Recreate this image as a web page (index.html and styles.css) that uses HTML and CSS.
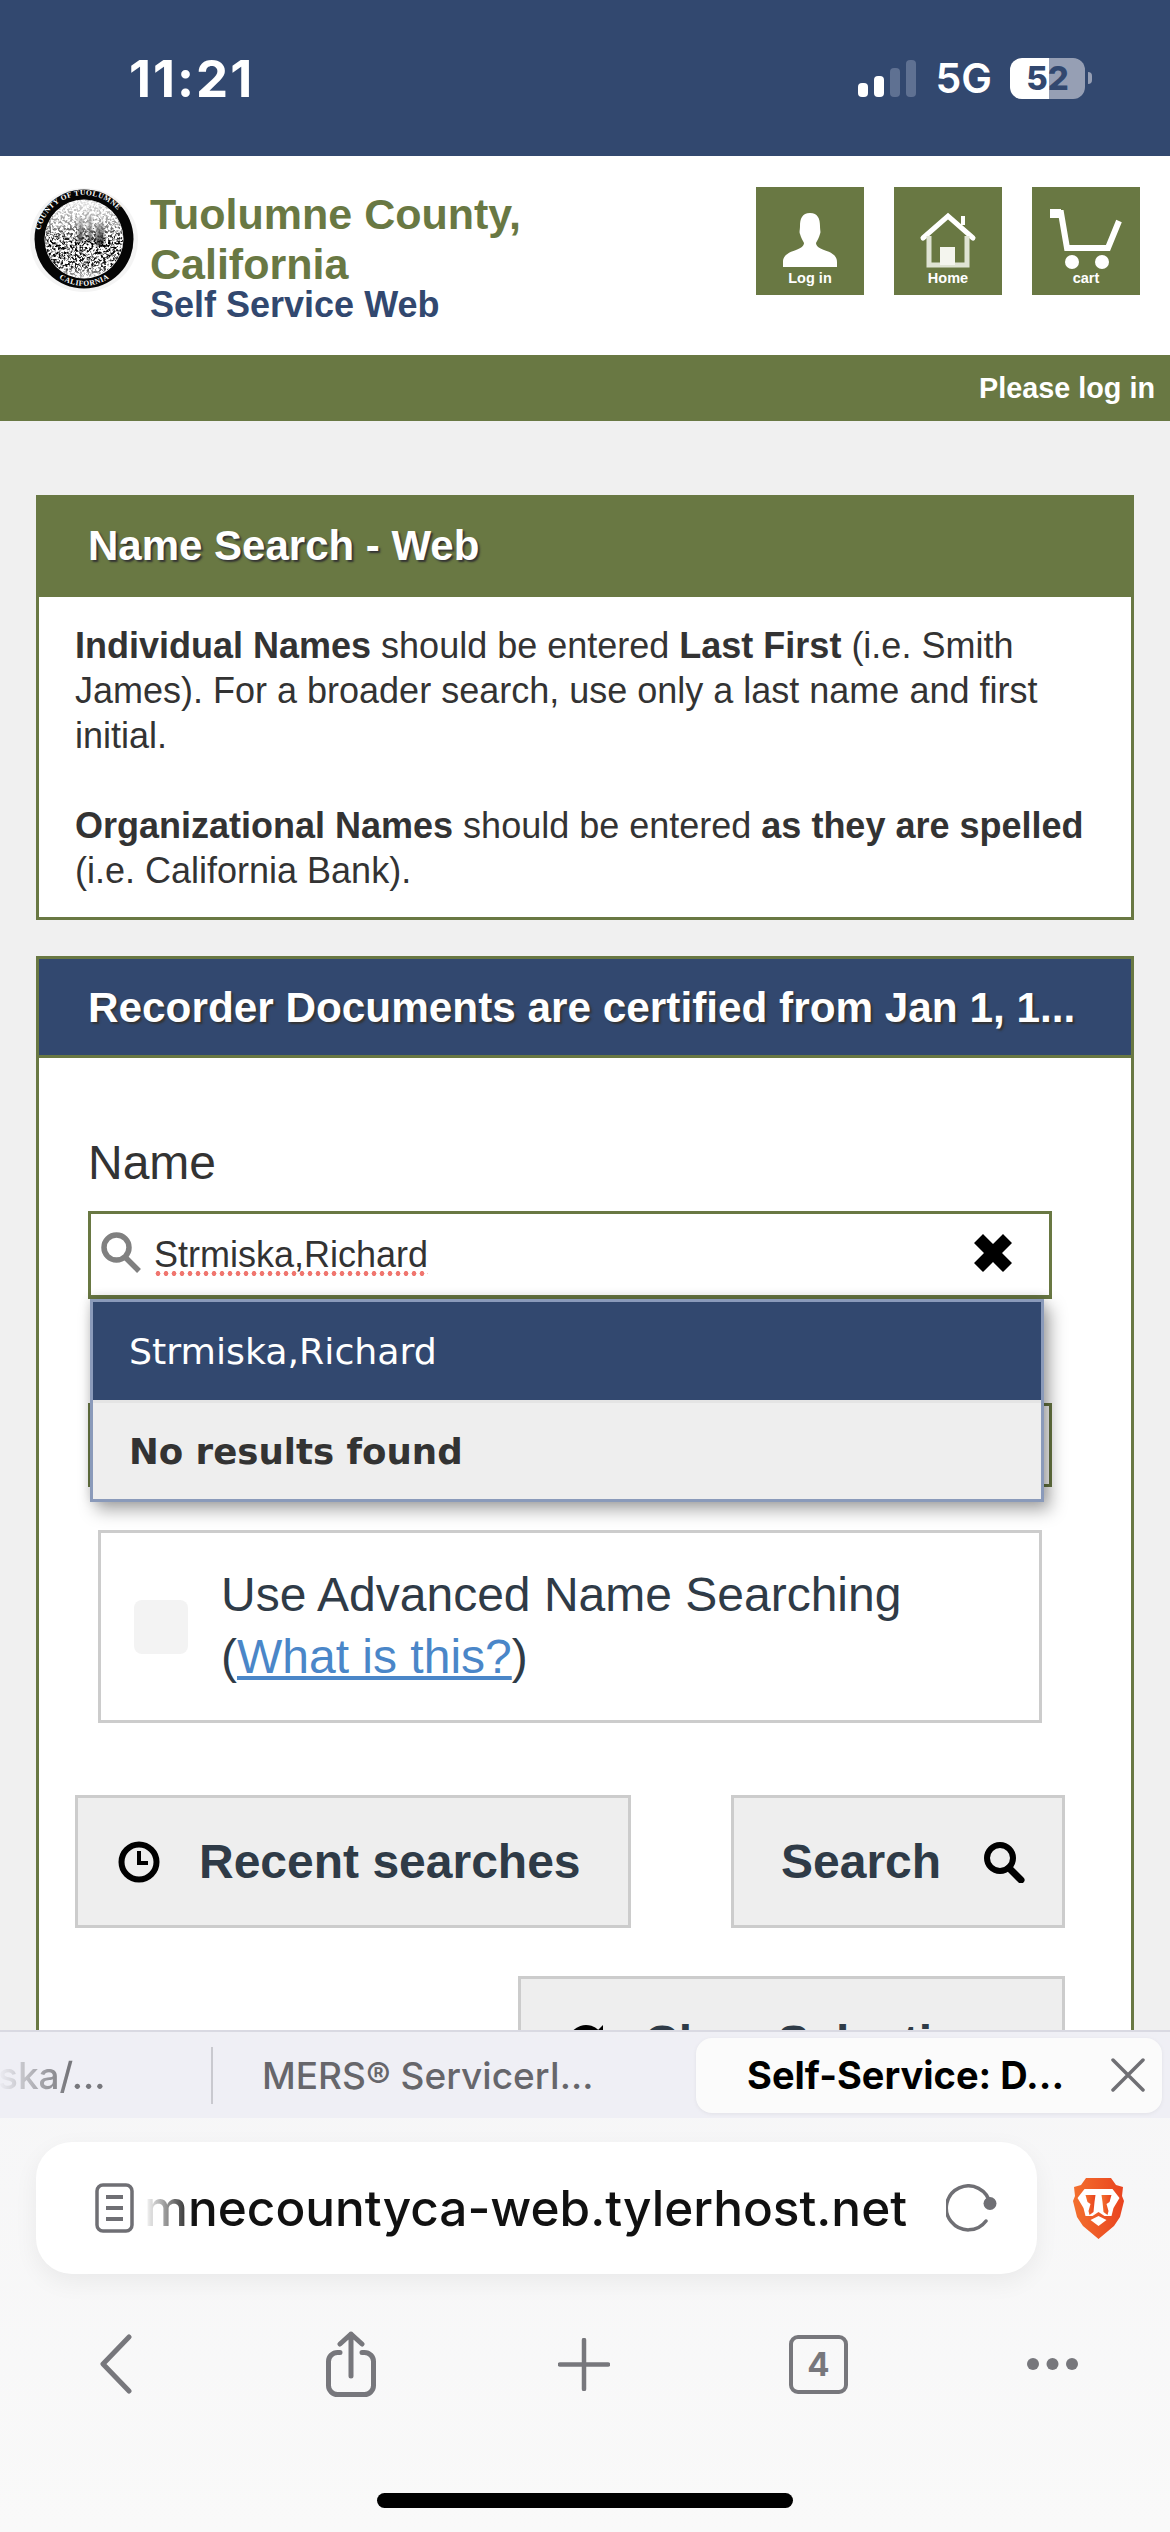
FILE: index.html
```html
<!DOCTYPE html>
<html lang="en">
<head>
<meta charset="utf-8">
<title>Self-Service: Name Search</title>
<link rel="stylesheet" href="styles.css">
</head>
<body>
<div class="screen">
  <div class="statusbar">
    <span class="clock">11:21</span>
    <div class="status-right">
      <div class="signal"><i class="b1"></i><i class="b2"></i><i class="b3"></i><i class="b4"></i></div>
      <span class="net">5G</span>
      <div class="battery"><span>52</span></div>
      <div class="nub"></div>
    </div>
  </div>

  <header class="site-header">
    <svg class="seal" viewBox="0 0 108 104" aria-hidden="true">
      <defs>
        <path id="arcT" d="M9 52a45 45 0 0 1 90 0"/>
        <path id="arcB" d="M11 66a45 45 0 0 0 86 0"/>
        <clipPath id="inner"><circle cx="54" cy="51" r="39"/></clipPath>
        <filter id="speck" x="0" y="0" width="100%" height="100%">
          <feTurbulence type="fractalNoise" baseFrequency="0.42" numOctaves="2" seed="7"/>
          <feColorMatrix type="matrix" values="0 0 0 0 0  0 0 0 0 0  0 0 0 0 0  3.500 3.500 0 0 -3.150"/>
        </filter>
        <linearGradient id="sky" x1="0" y1="0" x2="0" y2="1">
          <stop offset="0" stop-color="#fff" stop-opacity="0.9"/>
          <stop offset="0.32" stop-color="#fff" stop-opacity="0.55"/>
          <stop offset="0.55" stop-color="#fff" stop-opacity="0"/>
          <stop offset="0.85" stop-color="#fff" stop-opacity="0.1"/>
          <stop offset="1" stop-color="#fff" stop-opacity="0.8"/>
        </linearGradient>
      </defs>
      <ellipse cx="54" cy="52" rx="54" ry="52" fill="#f4f4f4"/>
      <circle cx="54" cy="51" r="49.500" fill="#050505"/>
      <circle cx="54" cy="51" r="39.500" fill="#fff"/>
      <text class="seal-t"><textPath href="#arcT" startOffset="7%">COUNTY OF TUOLUMNE</textPath></text>
      <text class="seal-t"><textPath href="#arcB" startOffset="27%">CALIFORNIA</textPath></text>
      <g clip-path="url(#inner)">
        <path class="seal-art" d="M48 30h5v24h-5zM58 28h4v26h-4zM66 36h8v22h-8z" fill="#555"/>
        <rect x="14" y="12" width="80" height="78" filter="url(#speck)"/>
        <rect x="14" y="12" width="80" height="78" fill="url(#sky)"/>
      </g>
    </svg>
    <div class="site-title">
      <h1>Tuolumne County,<br>California</h1>
      <p>Self Service Web</p>
    </div>
    <nav class="site-nav">
      <a class="tile">
        <svg viewBox="0 0 108 108" aria-hidden="true"><path class="blur" d="M54 26c8 0 10 6 10 13 0 4 1 6 0 8-1 4-3 7-4 9 0 3 3 5 8 7 9 3 13 6 13 12v5H27v-5c0-6 4-9 13-12 5-2 8-4 8-7-1-2-3-5-4-9-1-2 0-4 0-8 0-7 2-13 10-13z" fill="#fff"/></svg>
        <span>Log in</span>
      </a>
      <a class="tile">
        <svg viewBox="0 0 108 108" aria-hidden="true"><g class="blur" fill="none" stroke="#fff" stroke-width="5"><path d="M29 51l25-22 25 22" stroke-linecap="round"/><path d="M69 38v-9" stroke-width="4"/><path d="M35 49v29h38V49" stroke="#dfe3d4"/></g><path class="blur" d="M46 60h15v18H46z" fill="#f4f5ee"/></svg>
        <span>Home</span>
      </a>
      <a class="tile">
        <svg viewBox="0 0 108 108" aria-hidden="true"><g class="blur"><path d="M18 26h11l6 35h41l11-27" fill="none" stroke="#fff" stroke-width="6"/><path d="M18 22h11v9H18z" fill="#fff"/><circle cx="40" cy="75" r="7" fill="#fff"/><circle cx="70" cy="75" r="7" fill="#fff"/></g></svg>
        <span>cart</span>
      </a>
    </nav>
  </header>

  <div class="login-bar">Please log in</div>

  <main class="page">
    <section class="card">
      <h2 class="card-head green">Name Search - Web</h2>
      <div class="card-text">
        <p><b>Individual Names</b> should be entered <b>Last First</b> (i.e. Smith James). For a broader search, use only a last name and first initial.</p>
        <p><b>Organizational Names</b> should be entered <b>as they are spelled</b> (i.e. California Bank).</p>
      </div>
    </section>

    <section class="card card-form">
      <h2 class="card-head blue">Recorder Documents are certified from Jan 1, 1...</h2>
      <form class="form">
        <label class="field-label">Name</label>
        <div class="field-wrap">
          <div class="name-input">
            <svg class="mag" viewBox="0 0 41 42" aria-hidden="true"><circle cx="15.500" cy="15.500" r="12.500" fill="none" stroke="#808080" stroke-width="5.500"/><path d="M24 25l14 14" stroke="#808080" stroke-width="5.500"/></svg>
            <span class="typed">Strmiska,Richard</span>
            <svg class="clear" viewBox="0 0 42 42" aria-hidden="true"><path d="M2 11l9-9 10 10L31 2l9 9-10 10 10 10-9 9-10-10-10 10-9-9 10-10z" fill="#000"/></svg>
          </div>
          <ul class="suggest">
            <li class="on">Strmiska,Richard</li>
            <li class="none">No results found</li>
          </ul>
        </div>
        <div class="hidden-field"></div>
        <div class="adv-box">
          <span class="check"></span>
          <div class="adv-text">Use Advanced Name Searching<br>(<a class="link">What is this?</a>)</div>
        </div>
        <div class="btn-row">
          <button type="button" class="btn btn-recent">
            <svg viewBox="0 0 42 42" aria-hidden="true"><circle cx="21" cy="21" r="17.500" fill="none" stroke="#000" stroke-width="6"/><path d="M21 10v12h9" fill="none" stroke="#000" stroke-width="4"/></svg>
            <span>Recent searches</span>
          </button>
          <button type="button" class="btn btn-search">
            <span>Search</span>
            <svg viewBox="0 0 42 42" aria-hidden="true"><circle cx="17" cy="17" r="13" fill="none" stroke="#000" stroke-width="6"/><path d="M26 27l12 12" stroke="#000" stroke-width="7" stroke-linecap="round"/></svg>
          </button>
        </div>
        <div class="btn-row end">
          <button type="button" class="btn btn-clear">
            <svg viewBox="0 0 42 42" aria-hidden="true"><path d="M6 21a15 15 0 0 1 27-9" fill="none" stroke="#000" stroke-width="6"/><path d="M38 3v15H23z" fill="#000"/><path d="M36 21a15 15 0 0 1-27 9" fill="none" stroke="#000" stroke-width="6"/><path d="M4 39V24h15z" fill="#000"/></svg>
            <span>Clear Selection</span>
          </button>
        </div>
      </form>
    </section>
  </main>

  <div class="browser">
    <div class="tabstrip">
      <div class="tab tab-prev"><span>ska/...</span></div>
      <div class="tab-sep"></div>
      <div class="tab tab-mers">MERS® ServicerI...</div>
      <div class="tab tab-active">
        <span>Self-Service: D...</span>
        <svg viewBox="0 0 34 34" aria-hidden="true"><path d="M2 2l30 30M32 2L2 32" stroke="#6f6f74" stroke-width="3.500" stroke-linecap="round"/></svg>
      </div>
    </div>
    <div class="addr-row">
      <div class="addr">
        <svg class="doc" viewBox="0 0 39 50" aria-hidden="true"><rect x="2" y="2" width="35" height="46" rx="6" fill="none" stroke="#6f6f74" stroke-width="3.500"/><path d="M11 14h17M11 25h17M11 36h17" stroke="#6f6f74" stroke-width="4"/></svg>
        <span class="url">mnecountyca-web.tylerhost.net</span>
        <svg class="reload" viewBox="0 0 52 48" aria-hidden="true"><path d="M40 37A22 22 0 1 1 44 20" fill="none" stroke="#6f6f74" stroke-width="3.500" stroke-linecap="round"/><circle cx="44" cy="19.500" r="6.500" fill="#6f6f74"/></svg>
      </div>
      <svg class="brave" viewBox="0 0 51 61" aria-hidden="true">
        <defs><linearGradient id="bg" x1="0" y1="0" x2="1" y2="0"><stop offset="0" stop-color="#f3702e"/><stop offset="1" stop-color="#e9431f"/></linearGradient></defs>
        <path d="M13 0H38L43 7 50 9 49 18 51 23 47 39 41 48 25.500 61 10 48 4 39 0 23 2 18 1 9 8 7Z" fill="url(#bg)"/>
        <path d="M11.500 11H39.500L46.500 20 40.500 30 38.500 38H31.500L25.500 34 19.500 38H12.500L10.500 30 4.500 20Z" fill="#fff"/>
        <path d="M12.500 17H22.500L21.500 24 20.500 34 16.500 37 15.500 33 17.500 26 14.500 24Z" fill="url(#bg)"/>
        <path d="M38.500 17H28.500L29.500 24 30.500 34 34.500 37 35.500 33 33.500 26 36.500 24Z" fill="url(#bg)"/>
        <path d="M17.500 42L25.500 38 33.500 42 25.500 48Z" fill="#fff"/>
      </svg>
    </div>
    <div class="toolbar">
      <svg class="t-back" viewBox="0 0 32 60" aria-hidden="true"><path d="M29 3L3 30l26 27" fill="none" stroke="#77777c" stroke-width="5" stroke-linecap="round" stroke-linejoin="round"/></svg>
      <svg class="t-share" viewBox="0 0 50 66" aria-hidden="true"><path d="M14 21.500H11.500a9 9 0 0 0-9 9v24a9 9 0 0 0 9 9h27a9 9 0 0 0 9-9v-24a9 9 0 0 0-9-9H36" fill="none" stroke="#77777c" stroke-width="5" stroke-linecap="round"/><path d="M25 45V3M14 13L25 3 36 13" fill="none" stroke="#77777c" stroke-width="5" stroke-linecap="round" stroke-linejoin="round"/></svg>
      <svg class="t-plus" viewBox="0 0 52 53" aria-hidden="true"><path d="M26 2v49M2 26.500h48" stroke="#77777c" stroke-width="4.500" stroke-linecap="round"/></svg>
      <div class="t-tabs">4</div>
      <svg class="t-more" viewBox="0 0 53 14" aria-hidden="true"><circle cx="7" cy="7" r="6" fill="#77777c"/><circle cx="26.500" cy="7" r="6" fill="#77777c"/><circle cx="46" cy="7" r="6" fill="#77777c"/></svg>
    </div>
    <div class="home-bar"></div>
  </div>
</div>
</body>
</html>
```
FILE: styles.css
```css
* { box-sizing: border-box; }
html, body { margin: 0; padding: 0; }
body { font-family: "Liberation Sans", Arial, sans-serif; background: #f0f0f0; }
h1, h2, p, ul { margin: 0; padding: 0; }

.screen { width: 1170px; height: 2532px; display: flex; flex-direction: column; overflow: hidden; }

/* status bar */
.statusbar { height: 156px; flex: none; background: #32486f; color: #fff; display: flex; justify-content: space-between; align-items: center; padding: 0 78px 0 129px; font-family: Inter, sans-serif; }
.clock { font-size: 51px; font-weight: 700; letter-spacing: 2px; }
.status-right { display: flex; align-items: center; }
.signal { display: flex; align-items: flex-end; gap: 6px; height: 37px; margin-right: 20px; }
.signal i { width: 10px; border-radius: 4px; background: #fff; display: block; }
.signal .b1 { height: 14px; }
.signal .b2 { height: 21px; }
.signal .b3 { height: 29px; background: #5f7192; }
.signal .b4 { height: 37px; background: #5f7192; }
.net { font-size: 41px; font-weight: 600; margin-right: 18px; }
.battery { width: 75px; height: 41px; border-radius: 12px; background: linear-gradient(90deg, #fff 0 52%, #969fb4 52% 100%); color: #32486f; font-size: 33px; font-weight: 800; display: flex; align-items: center; justify-content: center; }
.nub { width: 4px; height: 12px; margin-left: 3px; background: #969fb4; border-radius: 0 6px 6px 0; }

/* site header */
.site-header { height: 199px; flex: none; background: #fff; display: flex; align-items: flex-start; padding: 32px 30px 0 30px; }
.seal { width: 108px; height: 104px; flex: none; }
.seal-t { font-family: "Liberation Serif", serif; font-size: 7.500px; font-weight: 700; fill: #fff; letter-spacing: 0.5px; }
.seal-art { filter: blur(1px); }
.site-title { margin-left: 12px; margin-top: 1px; flex: 1; }
.site-title h1 { font-size: 43px; line-height: 50px; font-weight: 700; color: #697843; }
.site-title p { font-size: 36px; line-height: 38px; margin-top: -3px; font-weight: 700; color: #32486f; }
.site-nav { display: flex; gap: 30px; margin-top: -1px; }
.tile { width: 108px; height: 108px; background: #697843; position: relative; display: block; color: #fff; font-size: 14.500px; font-weight: 700; text-align: center; }
.tile svg { width: 108px; height: 108px; display: block; }
.tile span { position: absolute; left: 0; right: 0; top: 82px; line-height: 18px; }
.blur { filter: blur(0.7px); }

.login-bar { height: 66px; flex: none; background: #697843; color: #fff; font-size: 28.800px; font-weight: 700; display: flex; align-items: center; justify-content: flex-end; padding: 0 15px 0 0; }

/* page */
.page { flex: 1; min-height: 0; overflow: hidden; background: #f0f0f0; padding: 74px 36px 0; }
.card { background: #fff; border: 3px solid #697843; }
.card-form { margin-top: 36px; }
.card-head { font-size: 42.300px; line-height: 96px; font-weight: 700; color: #fff; text-shadow: 2px 2px 2px #333; padding: 0 0 0 49px; white-space: nowrap; }
.card-head.green { background: #697843; height: 99px; font-size: 42px; }
.card-head.blue { background: #32486f; height: 96px; line-height: 97px; }
.card-text { padding: 26px 36px 24px; font-size: 36px; line-height: 45px; color: #333; }
.card-text p + p { margin-top: 45px; }
.card-form .form { border-top: 3px solid #697843; }

/* form */
.form { padding: 77px 66px 0 36px; height: 1100px; }
.field-label { display: block; margin-left: 13px; font-size: 48px; line-height: 56px; color: #333; }
.field-wrap { position: relative; margin-top: 20px; margin-left: 13px; width: 964px; }
.name-input { height: 88px; border: 3px solid #697843; border-bottom-width: 4px; background: #fff; display: flex; align-items: flex-start; padding: 18px 35px 0 10px; }
.mag { width: 41px; height: 42px; flex: none; }
.typed { margin-left: 12px; margin-top: 1px; height: 43px; font-size: 36px; line-height: 44px; color: #333; background: radial-gradient(circle, #f0766f 2.200px, transparent 2.700px) left bottom / 8px 5px repeat-x; }
.clear { width: 42px; height: 42px; margin-left: auto; flex: none; }
.suggest { list-style: none; position: absolute; left: 2px; top: 88px; width: 954px; height: 203px; border: 3px solid #8a9aba; font-family: "DejaVu Sans", Verdana, sans-serif; font-size: 36.300px; box-shadow: 6px 8px 16px rgba(0, 0, 0, 0.34), 0 -2px 10px rgba(0, 0, 0, 0.14); background: #eee; z-index: 3; }
.suggest li { height: 98px; display: flex; align-items: center; padding-left: 36px; }
.suggest .on { background: #32486f; color: #fff; }
.suggest .none { height: 99px; font-size: 35.600px; font-weight: 700; color: #333; background: #eee; border-top: 3px solid #e4e4e4; }
.hidden-field { height: 84px; width: 964px; margin-top: 104px; margin-left: 13px; border: 3px solid #697843; background: #fff; }
.adv-box { margin: 43px 0 0 23px; width: 944px; height: 193px; border: 3px solid #ccc; display: flex; align-items: center; padding: 0 0 2px 33px; color: #2f3b47; }
.check { width: 54px; height: 54px; background: #f3f3f3; border-radius: 8px; flex: none; margin-top: 2px; }
.adv-text { margin-left: 33px; font-size: 48px; line-height: 62px; }
.link { color: #4a86c8; text-decoration: underline; }

.btn-row { display: flex; justify-content: space-between; margin-top: 72px; }
.btn-row.end { justify-content: flex-end; margin-top: 48px; }
.btn { height: 133px; border: 3px solid #ccc; background: #eee; display: flex; align-items: center; color: #2f3b47; font-family: "Liberation Sans", Arial, sans-serif; font-size: 48px; font-weight: 700; padding: 0; }
.btn svg { width: 42px; height: 42px; flex: none; }
.btn-recent { width: 556px; padding-left: 40px; gap: 39px; }
.btn-search { width: 334px; padding-left: 47px; gap: 42px; }
.btn-clear { width: 547px; padding-left: 44px; gap: 37px; }

/* browser chrome */
.browser { height: 502px; flex: none; background: linear-gradient(#f6f6f7, #f9f9f9); position: relative; font-family: Inter, sans-serif; z-index: 5; }
.tabstrip { height: 88px; background: #efeff5; border-top: 2px solid #d9d9e2; display: flex; align-items: center; position: relative; }
.tab { font-size: 37px; white-space: nowrap; flex: none; }
.tab-prev { width: 211px; margin-left: 0; color: #77777c; font-weight: 500; overflow: hidden; }
.tab-prev span { display: block; margin-left: -2px; -webkit-mask-image: linear-gradient(90deg, transparent 0, #000 70px); mask-image: linear-gradient(90deg, transparent 0, #000 70px); }
.tab-sep { width: 2px; height: 57px; background: #c9c9cf; flex: none; }
.tab-mers { margin-left: 49px; width: 434px; color: #66666b; font-weight: 500; }
.tab-active { width: 466px; height: 75px; background: #fbfbfb; border-radius: 16px; display: flex; align-items: center; padding: 0 17px 0 51px; color: #000; font-size: 38px; font-weight: 700; box-shadow: 0 1px 4px rgba(0, 0, 0, 0.06); }
.tab-active svg { width: 34px; height: 34px; margin-left: auto; flex: none; }

.addr-row { display: flex; align-items: center; padding: 24px 47px 0 36px; }
.addr { width: 1001px; height: 132px; background: #fff; border-radius: 36px; box-shadow: 0 8px 24px rgba(0, 0, 0, 0.06); display: flex; align-items: center; padding-left: 59px; flex: none; }
.doc { width: 39px; height: 50px; flex: none; }
.url { margin-left: 10px; width: 773px; flex: none; font-size: 49.500px; font-weight: 500; color: #111; white-space: nowrap; -webkit-mask-image: linear-gradient(90deg, transparent 0, #000 50px); mask-image: linear-gradient(90deg, transparent 0, #000 50px); }
.reload { width: 52px; height: 48px; flex: none; margin-left: 29px; }
.brave { width: 51px; height: 61px; flex: none; margin-left: 36px; }

.toolbar { position: relative; height: 66px; margin-top: 57px; display: flex; align-items: center; padding-left: 100px; }
.toolbar svg { flex: none; }
.t-back { width: 32px; height: 60px; }
.t-share { width: 50px; height: 66px; margin-left: 194px; }
.t-plus { width: 52px; height: 53px; margin-left: 182px; }
.t-tabs { width: 59px; height: 59px; margin-left: 179px; border: 4px solid #77777c; border-radius: 9px; color: #77777c; font-size: 33px; font-weight: 700; display: flex; align-items: center; justify-content: center; flex: none; }
.t-more { width: 53px; height: 14px; margin-left: 178px; }
.home-bar { position: absolute; left: 377px; top: 463px; width: 416px; height: 15px; border-radius: 8px; background: #000; }
```
